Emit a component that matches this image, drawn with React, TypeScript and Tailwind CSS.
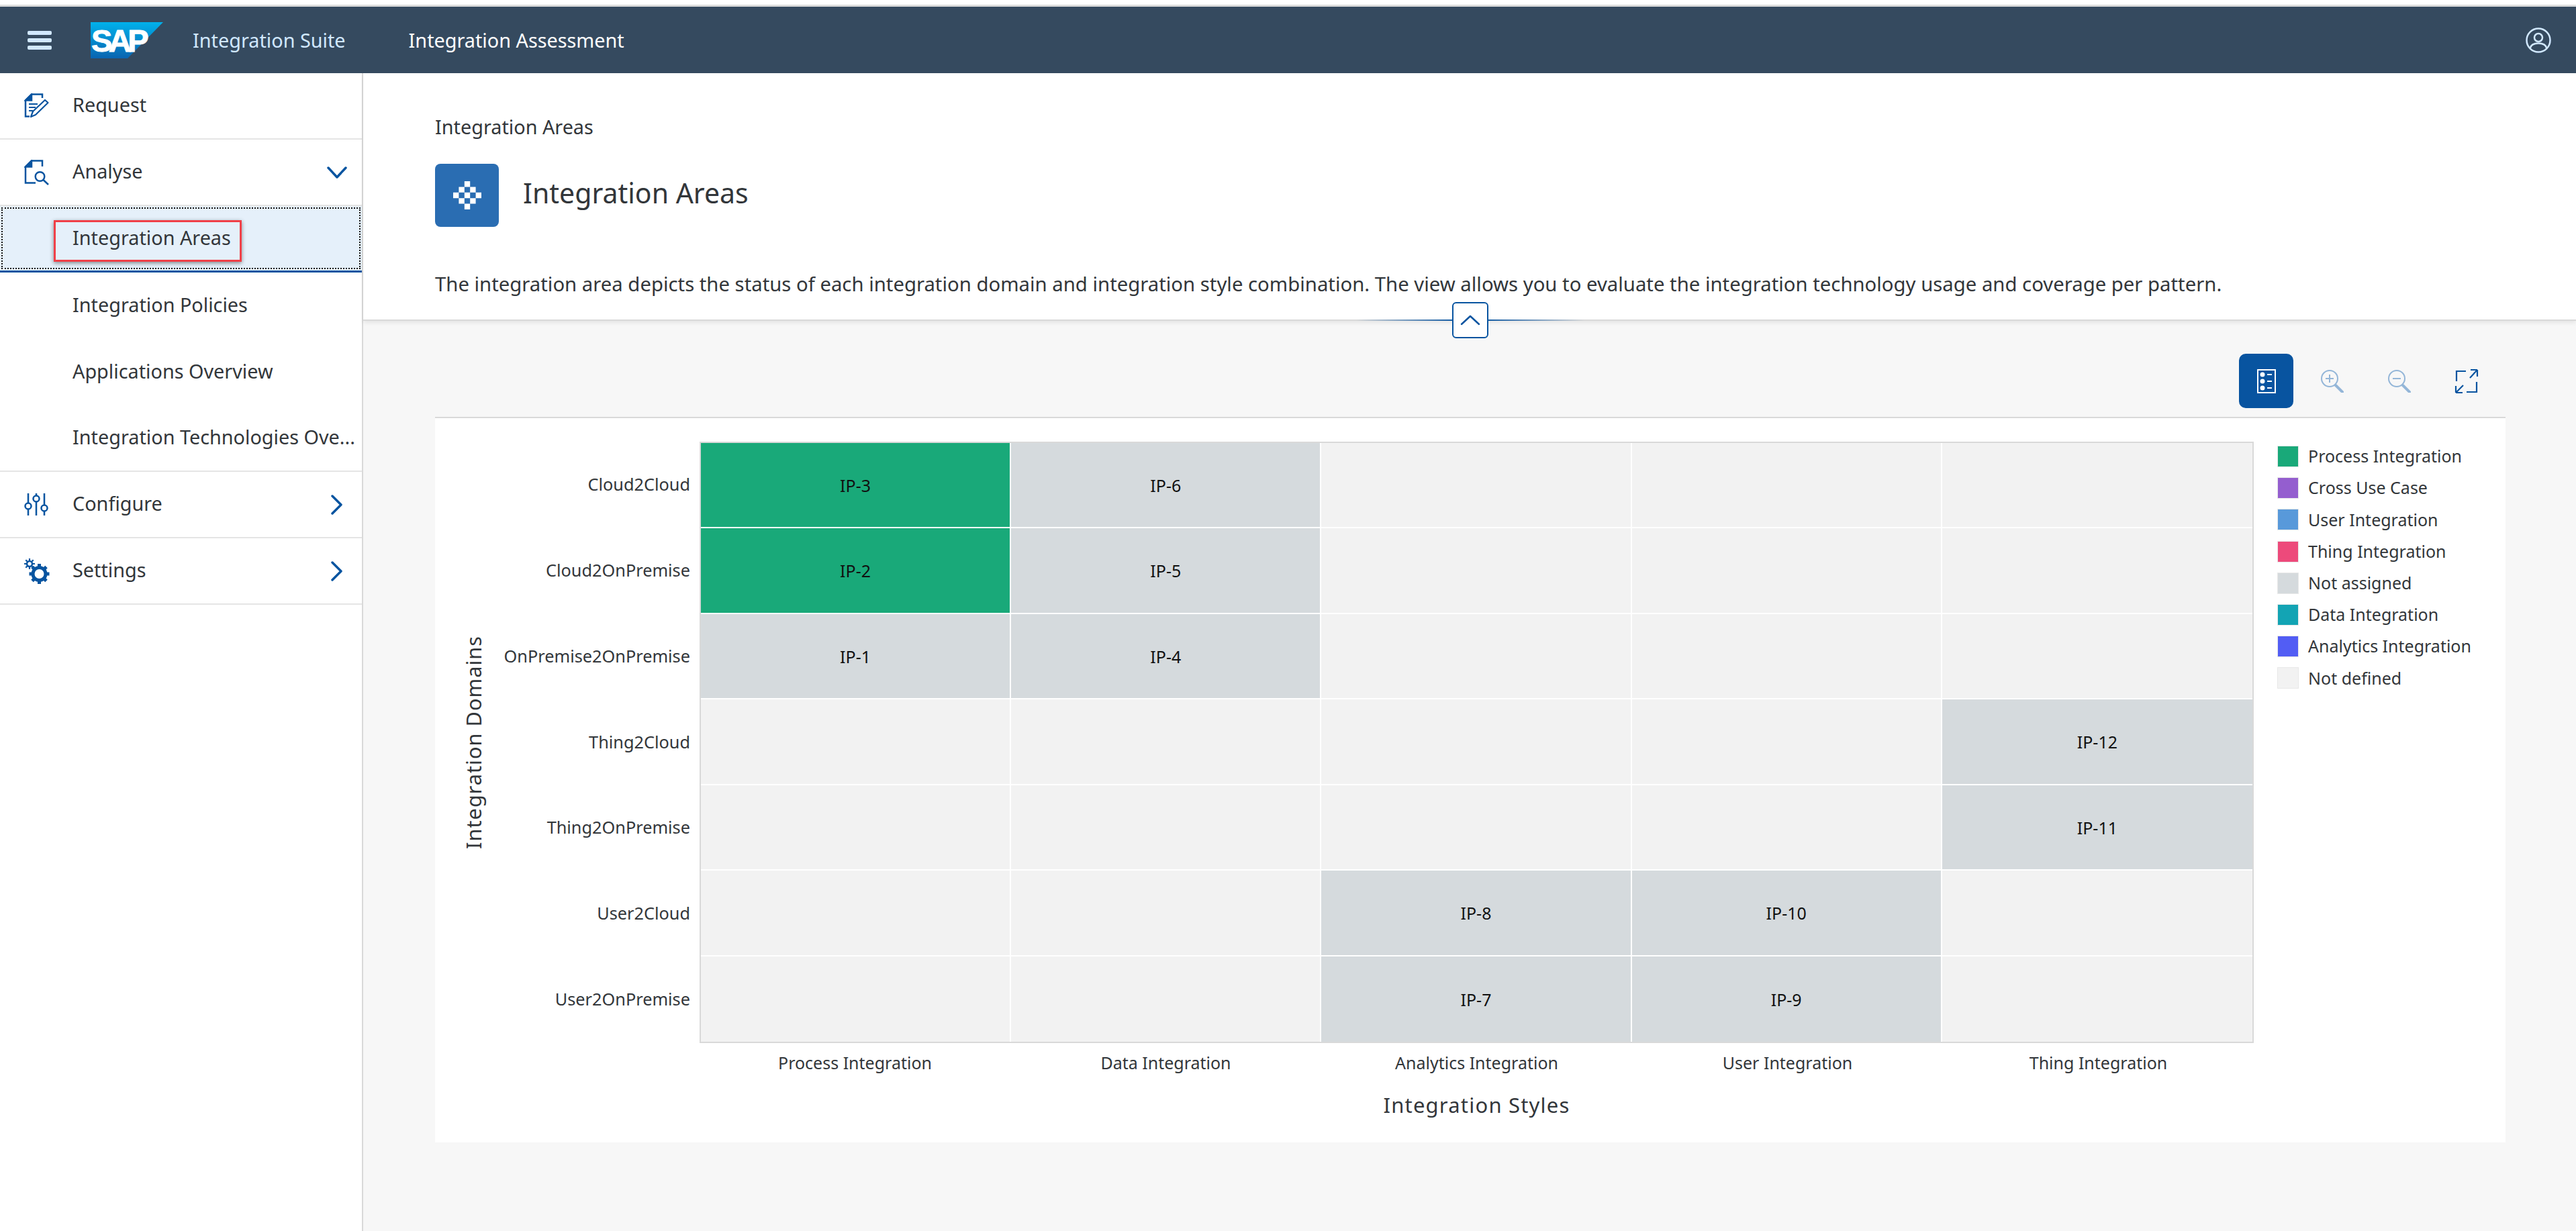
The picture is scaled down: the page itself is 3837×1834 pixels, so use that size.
import React from "react";

const blue = "#0854a0";

function Chevron({ down }: { down?: boolean }) {
  return down ? (
    <svg width="30" height="18" viewBox="0 0 30 18" className="shrink-0"><path d="M2 2 L15 16 L28 2" fill="none" stroke={blue} strokeWidth="3.500" strokeLinecap="round" strokeLinejoin="round" /></svg>
  ) : (
    <svg width="18" height="30" viewBox="0 0 18 30" className="shrink-0"><path d="M2 2 L15 15 L2 28" fill="none" stroke={blue} strokeWidth="3.500" strokeLinecap="round" strokeLinejoin="round" /></svg>
  );
}

const RequestIcon = () => (
  <svg width="38" height="38" viewBox="0 0 38 38" fill="none" stroke={blue} strokeWidth="2.500">
    <path d="M27 7V1.500H11L2 10.500V34.500H8" />
    <path d="M2 10.500L11 1.500V10.500Z" fill={blue} />
    <path d="M7 16H20M7 21H17M7 26H13" strokeWidth="2" />
    <path d="M10 35L13 27L31 10L35.500 14L17 32Z" strokeWidth="2.200" strokeLinejoin="round" />
  </svg>
);
const AnalyseIcon = () => (
  <svg width="38" height="38" viewBox="0 0 38 38" fill="none" stroke={blue} strokeWidth="2.500">
    <path d="M27 10V1.500H11L2 10.500V34.500H17" />
    <path d="M2 10.500L11 1.500V10.500Z" fill={blue} />
    <circle cx="23.500" cy="25" r="6.800" />
    <path d="M28.500 30L36 37" />
  </svg>
);
const ConfigureIcon = () => (
  <svg width="38" height="34" viewBox="0 0 38 34" fill="none" stroke={blue} strokeWidth="2.500">
    <path d="M6 0V14.500M6 23.500V33M18 0V3.500M18 12.500V33M30 0V17.500M30 26.500V33" />
    <circle cx="6" cy="19" r="4.500" />
    <circle cx="18" cy="8" r="4.500" />
    <circle cx="30" cy="22" r="4.500" />
  </svg>
);
const SettingsIcon = () => (
  <svg width="38" height="38" viewBox="0 0 38 38" fill="none" stroke={blue}>
    <circle cx="8" cy="8" r="4" strokeWidth="2.500" />
    <path d="M8 0V3M8 13V16M0 8H3M13 8H16M2.300 2.300L4.500 4.500M11.500 11.500L13.700 13.700M13.700 2.300L11.500 4.500M4.500 11.500L2.300 13.700" strokeWidth="2.200" />
    <circle cx="22.500" cy="23" r="9.500" strokeWidth="5" />
    <path d="M22.500 8V12M22.500 34V38M7.500 23H11.500M33.500 23H37.500M12 12.500L15 15.500M30 30.500L33 33.500M33 12.500L30 15.500M15 30.500L12 33.500" strokeWidth="5" />
  </svg>
);

function NavRow({ icon, label, chevron, selected, sub }: { icon?: React.ReactNode; label: string; chevron?: "down" | "right"; selected?: boolean; sub?: boolean }) {
  return (
    <div className={"relative flex items-center h-[99px] pl-[36px] shrink-0 " + (selected ? "bg-[#e5f0fa] border-b-[3px] border-[#0854a0]" : sub ? "" : "border-b-2 border-[#e5e5e5]")}>
      {selected && <div className="absolute left-[2px] right-[2px] top-[2px] bottom-[2px] border-2 border-dotted border-[#111]" />}
      <div className="w-[72px] shrink-0 flex items-center">{icon}</div>
      <span className="flex-1 min-w-0 whitespace-nowrap text-[28.800px] leading-[36px] mb-[3px] text-[#32363a]">{label}</span>
      {chevron && <div className={"shrink-0 flex justify-center " + (chevron === "down" ? "w-[30px] mr-[22px]" : "w-[18px] mr-[28px]")}><Chevron down={chevron === "down"} /></div>}
    </div>
  );
}

const legend = [
  ["Process Integration", "bg-[#19a979]"],
  ["Cross Use Case", "bg-[#945ecf]"],
  ["User Integration", "bg-[#5899da]"],
  ["Thing Integration", "bg-[#ed4a7b]"],
  ["Not assigned", "bg-[#d5dadd]"],
  ["Data Integration", "bg-[#13a4b4]"],
  ["Analytics Integration", "bg-[#525df4]"],
  ["Not defined", "bg-[#f2f2f2]"],
];

const rows = ["Cloud2Cloud", "Cloud2OnPremise", "OnPremise2OnPremise", "Thing2Cloud", "Thing2OnPremise", "User2Cloud", "User2OnPremise"];
const cols = ["Process Integration", "Data Integration", "Analytics Integration", "User Integration", "Thing Integration"];

const cells: Record<string, [string, boolean]> = {
  "0-0": ["IP-3", true],
  "0-1": ["IP-6", false],
  "1-0": ["IP-2", true],
  "1-1": ["IP-5", false],
  "2-0": ["IP-1", false],
  "2-1": ["IP-4", false],
  "3-4": ["IP-12", false],
  "4-4": ["IP-11", false],
  "5-2": ["IP-8", false],
  "5-3": ["IP-10", false],
  "6-2": ["IP-7", false],
  "6-3": ["IP-9", false],
};

export default function App() {
  return (
    <div className="w-[3837px] h-[1834px] flex flex-col bg-white overflow-hidden font-['Noto_Sans','Open_Sans',sans-serif] text-[#32363a]">
      <div className="h-[10px] shrink-0 bg-white border-b-[3px] border-[#dcdcdc]" />
      <header className="h-[99px] shrink-0 bg-[#354a5f] flex items-center">
        <div className="ml-[41px] w-[36px] h-[28px] flex flex-col justify-between">
          <div className="h-[6px] rounded-[2px] bg-[#d1e8ff]" />
          <div className="h-[6px] rounded-[2px] bg-[#d1e8ff]" />
          <div className="h-[6px] rounded-[2px] bg-[#d1e8ff]" />
        </div>
        <svg width="110" height="54" viewBox="0 0 110 54" className="ml-[58px] shrink-0">
          <defs>
            <linearGradient id="sapg" x1="0" y1="0" x2="0" y2="1">
              <stop offset="0" stopColor="#00b1eb" />
              <stop offset="1" stopColor="#0a64b0" />
            </linearGradient>
          </defs>
          <polygon points="0,0 108,0 55,54 0,54" fill="url(#sapg)" />
          <text x="1" y="44" fontFamily="Liberation Sans" fontWeight="700" fontSize="47" letterSpacing="-5.500" fill="#fff" stroke="#fff" strokeWidth="1">SAP</text>
        </svg>
        <span className="ml-[42px] text-[28.800px] text-[#d1e8ff]">Integration Suite</span>
        <span className="ml-[94px] text-[28.800px] text-white">Integration Assessment</span>
        <svg width="38" height="38" viewBox="0 0 38 38" fill="none" stroke="#d1e8ff" strokeWidth="2.500" className="ml-auto mr-[37px]">
          <circle cx="19" cy="19" r="17.500" />
          <circle cx="19" cy="15" r="6" />
          <path d="M6.500 31C8 25 13 23.500 19 23.500S30 25 31.500 31" />
        </svg>
      </header>
      <div className="flex-1 flex min-h-0">
        <aside className="relative w-[541px] shrink-0 border-r-2 border-[#d9d9d9] flex flex-col">
          <NavRow icon={<RequestIcon />} label="Request" />
          <NavRow icon={<AnalyseIcon />} label="Analyse" chevron="down" />
          <NavRow label="Integration Areas" selected />
          <NavRow label="Integration Policies" sub />
          <NavRow label="Applications Overview" sub />
          <NavRow label="Integration Technologies Ove..." />
          <NavRow icon={<ConfigureIcon />} label="Configure" chevron="right" />
          <NavRow icon={<SettingsIcon />} label="Settings" chevron="right" />
          <div className="absolute left-[80px] top-[219px] w-[280px] h-[62px] border-[3px] border-[#f04048] shadow-[0_2px_6px_rgba(0,0,0,0.45)]" />
        </aside>
        <main className="flex-1 min-w-0 flex flex-col">
          <section className="relative h-[369px] shrink-0 pl-[107px] border-b-2 border-[#d9d9d9] shadow-[0_3px_6px_rgba(0,0,0,0.08)]">
            <div className="pt-[60px] text-[28.800px] leading-[40px]">Integration Areas</div>
            <div className="mt-[35px] flex items-center">
              <div className="w-[95px] h-[94px] rounded-[8px] bg-[#2a6db2] flex items-center justify-center">
                <svg width="42" height="42" viewBox="0 0 42 42" fill="#fff">
                  <path d="M16.800 0h8.400v8.400h-8.400zM8.400 8.400h8.400v8.400H8.400zM25.200 8.400h8.400v8.400h-8.400zM0 16.800h8.400v8.400H0zM16.800 16.800h8.400v8.400h-8.400zM33.600 16.800h8.400v8.400h-8.400zM8.400 25.200h8.400v8.400H8.400zM25.200 25.200h8.400v8.400h-8.400zM16.800 33.600h8.400V42h-8.400z" />
                </svg>
              </div>
              <h1 className="ml-[36px] mb-[6px] text-[41px] font-normal">Integration Areas</h1>
            </div>
            <p className="mt-[65px] text-[29.300px] leading-[40px]">The integration area depicts the status of each integration domain and integration style combination. The view allows you to evaluate the integration technology usage and coverage per pattern.</p>
            <div className="absolute left-[1479px] top-[367px] w-[340px] h-[2px] bg-[linear-gradient(90deg,transparent,#0854a0_45%,#0854a0_55%,transparent)]" />
            <div className="absolute left-[1622px] top-[341px] w-[54px] h-[54px] rounded-[6px] border-2 border-[#0854a0] bg-white flex items-center justify-center">
              <svg width="30" height="16" viewBox="0 0 30 16"><path d="M2 14L15 2L28 14" fill="none" stroke="#0854a0" strokeWidth="2.500" strokeLinecap="round" strokeLinejoin="round" /></svg>
            </div>
          </section>
          <section className="flex-1 bg-[#f7f7f7] pl-[107px] pr-[105px] flex flex-col">
            <div className="h-[143px] shrink-0 flex items-end justify-end pr-[9px] pb-[13px]">
              <div className="w-[81px] h-[81px] rounded-[10px] bg-[#0854a0] flex items-center justify-center">
                <svg width="30" height="38" viewBox="0 0 30 38" fill="none" stroke="#fff" strokeWidth="2">
                  <rect x="2" y="2" width="26" height="34" />
                  <g fill="#fff" stroke="none"><circle cx="9" cy="9" r="3.500" /><circle cx="9" cy="19" r="3.500" /><circle cx="9" cy="29" r="3.500" /></g>
                  <path d="M16 9H23M16 19H23M16 29H23" />
                </svg>
              </div>
              <div className="w-[100px] h-[81px] flex items-center justify-center ml-[8px]">
                <svg width="34" height="34" viewBox="0 0 34 34" fill="none" stroke="#94b6d8" strokeWidth="2"><circle cx="13" cy="13" r="12" /><path d="M13 7V19M7 13H19" /><path d="M22 23L32 33" strokeWidth="4" strokeLinecap="round" /></svg>
              </div>
              <div className="w-[100px] h-[81px] flex items-center justify-center">
                <svg width="34" height="34" viewBox="0 0 34 34" fill="none" stroke="#94b6d8" strokeWidth="2"><circle cx="13" cy="13" r="12" /><path d="M7 13H19" /><path d="M22 23L32 33" strokeWidth="4" strokeLinecap="round" /></svg>
              </div>
              <div className="w-[99px] h-[81px] flex items-center justify-center">
                <svg width="36" height="38" viewBox="0 0 36 38" fill="none" stroke="#0854a0" strokeWidth="2.200"><path d="M17 4H3V19M18 35H33V20M23 14L34 2M34 2H24M34 2V12M13 25L2 36M2 36H12M2 36V26" /></svg>
              </div>
            </div>
            <div className="h-[1081px] shrink-0 bg-white border-t-2 border-[#d9d9d9] flex">
              <div className="flex flex-col w-[2709px] shrink-0">
                <div className="flex h-[931px] pt-[35px]">
                  <div className="w-[100px] pl-[14px] shrink-0 flex items-center justify-center">
                    <span className="[writing-mode:vertical-rl] rotate-180 text-[30.700px] tracking-[1px]">Integration Domains</span>
                  </div>
                  <div className="w-[294px] shrink-0 grid grid-rows-7 pr-[14px] pb-[1px]">
                    {rows.map((r) => (
                      <div key={r} className="flex items-center justify-end text-[25.300px] whitespace-nowrap">{r}</div>
                    ))}
                  </div>
                  <div className="w-[2315px] shrink-0 grid grid-cols-5 grid-rows-7 border-2 border-[#d9d9d9] bg-[#f2f2f2]">
                    {rows.map((_, ri) =>
                      cols.map((_, ci) => {
                        const c = cells[ri + "-" + ci];
                        return (
                          <div key={ri + "-" + ci} className={"flex items-center justify-center pt-[2px] text-[25px] text-[#111] border-white " + (ri < 6 ? "border-b-2 " : "") + (ci < 4 ? "border-r-2 " : "") + (c ? (c[1] ? "bg-[#19a979]" : "bg-[#d5dadd]") : "bg-[#f2f2f2]")}>
                            {c ? c[0] : ""}
                          </div>
                        );
                      })
                    )}
                  </div>
                </div>
                <div className="pl-[394px] grid grid-cols-5 pt-[12px]">
                  {cols.map((c) => (
                    <div key={c} className="text-center text-[25px] leading-[34px]">{c}</div>
                  ))}
                </div>
                <div className="pl-[394px] pt-[26px] text-center text-[31px] leading-[40px] tracking-[1.200px]">Integration Styles</div>
              </div>
              <div className="pl-[35px] pt-[41px] flex flex-col gap-[15.200px]">
                {legend.map(([l, c]) => (
                  <div key={l} className="flex items-center h-[32px]">
                    <div className={"w-[32px] h-[32px] border border-[#e8e8e8] " + c} />
                    <span className="ml-[14px] text-[25px] whitespace-nowrap">{l}</span>
                  </div>
                ))}
              </div>
            </div>
          </section>
        </main>
      </div>
    </div>
  );
}
